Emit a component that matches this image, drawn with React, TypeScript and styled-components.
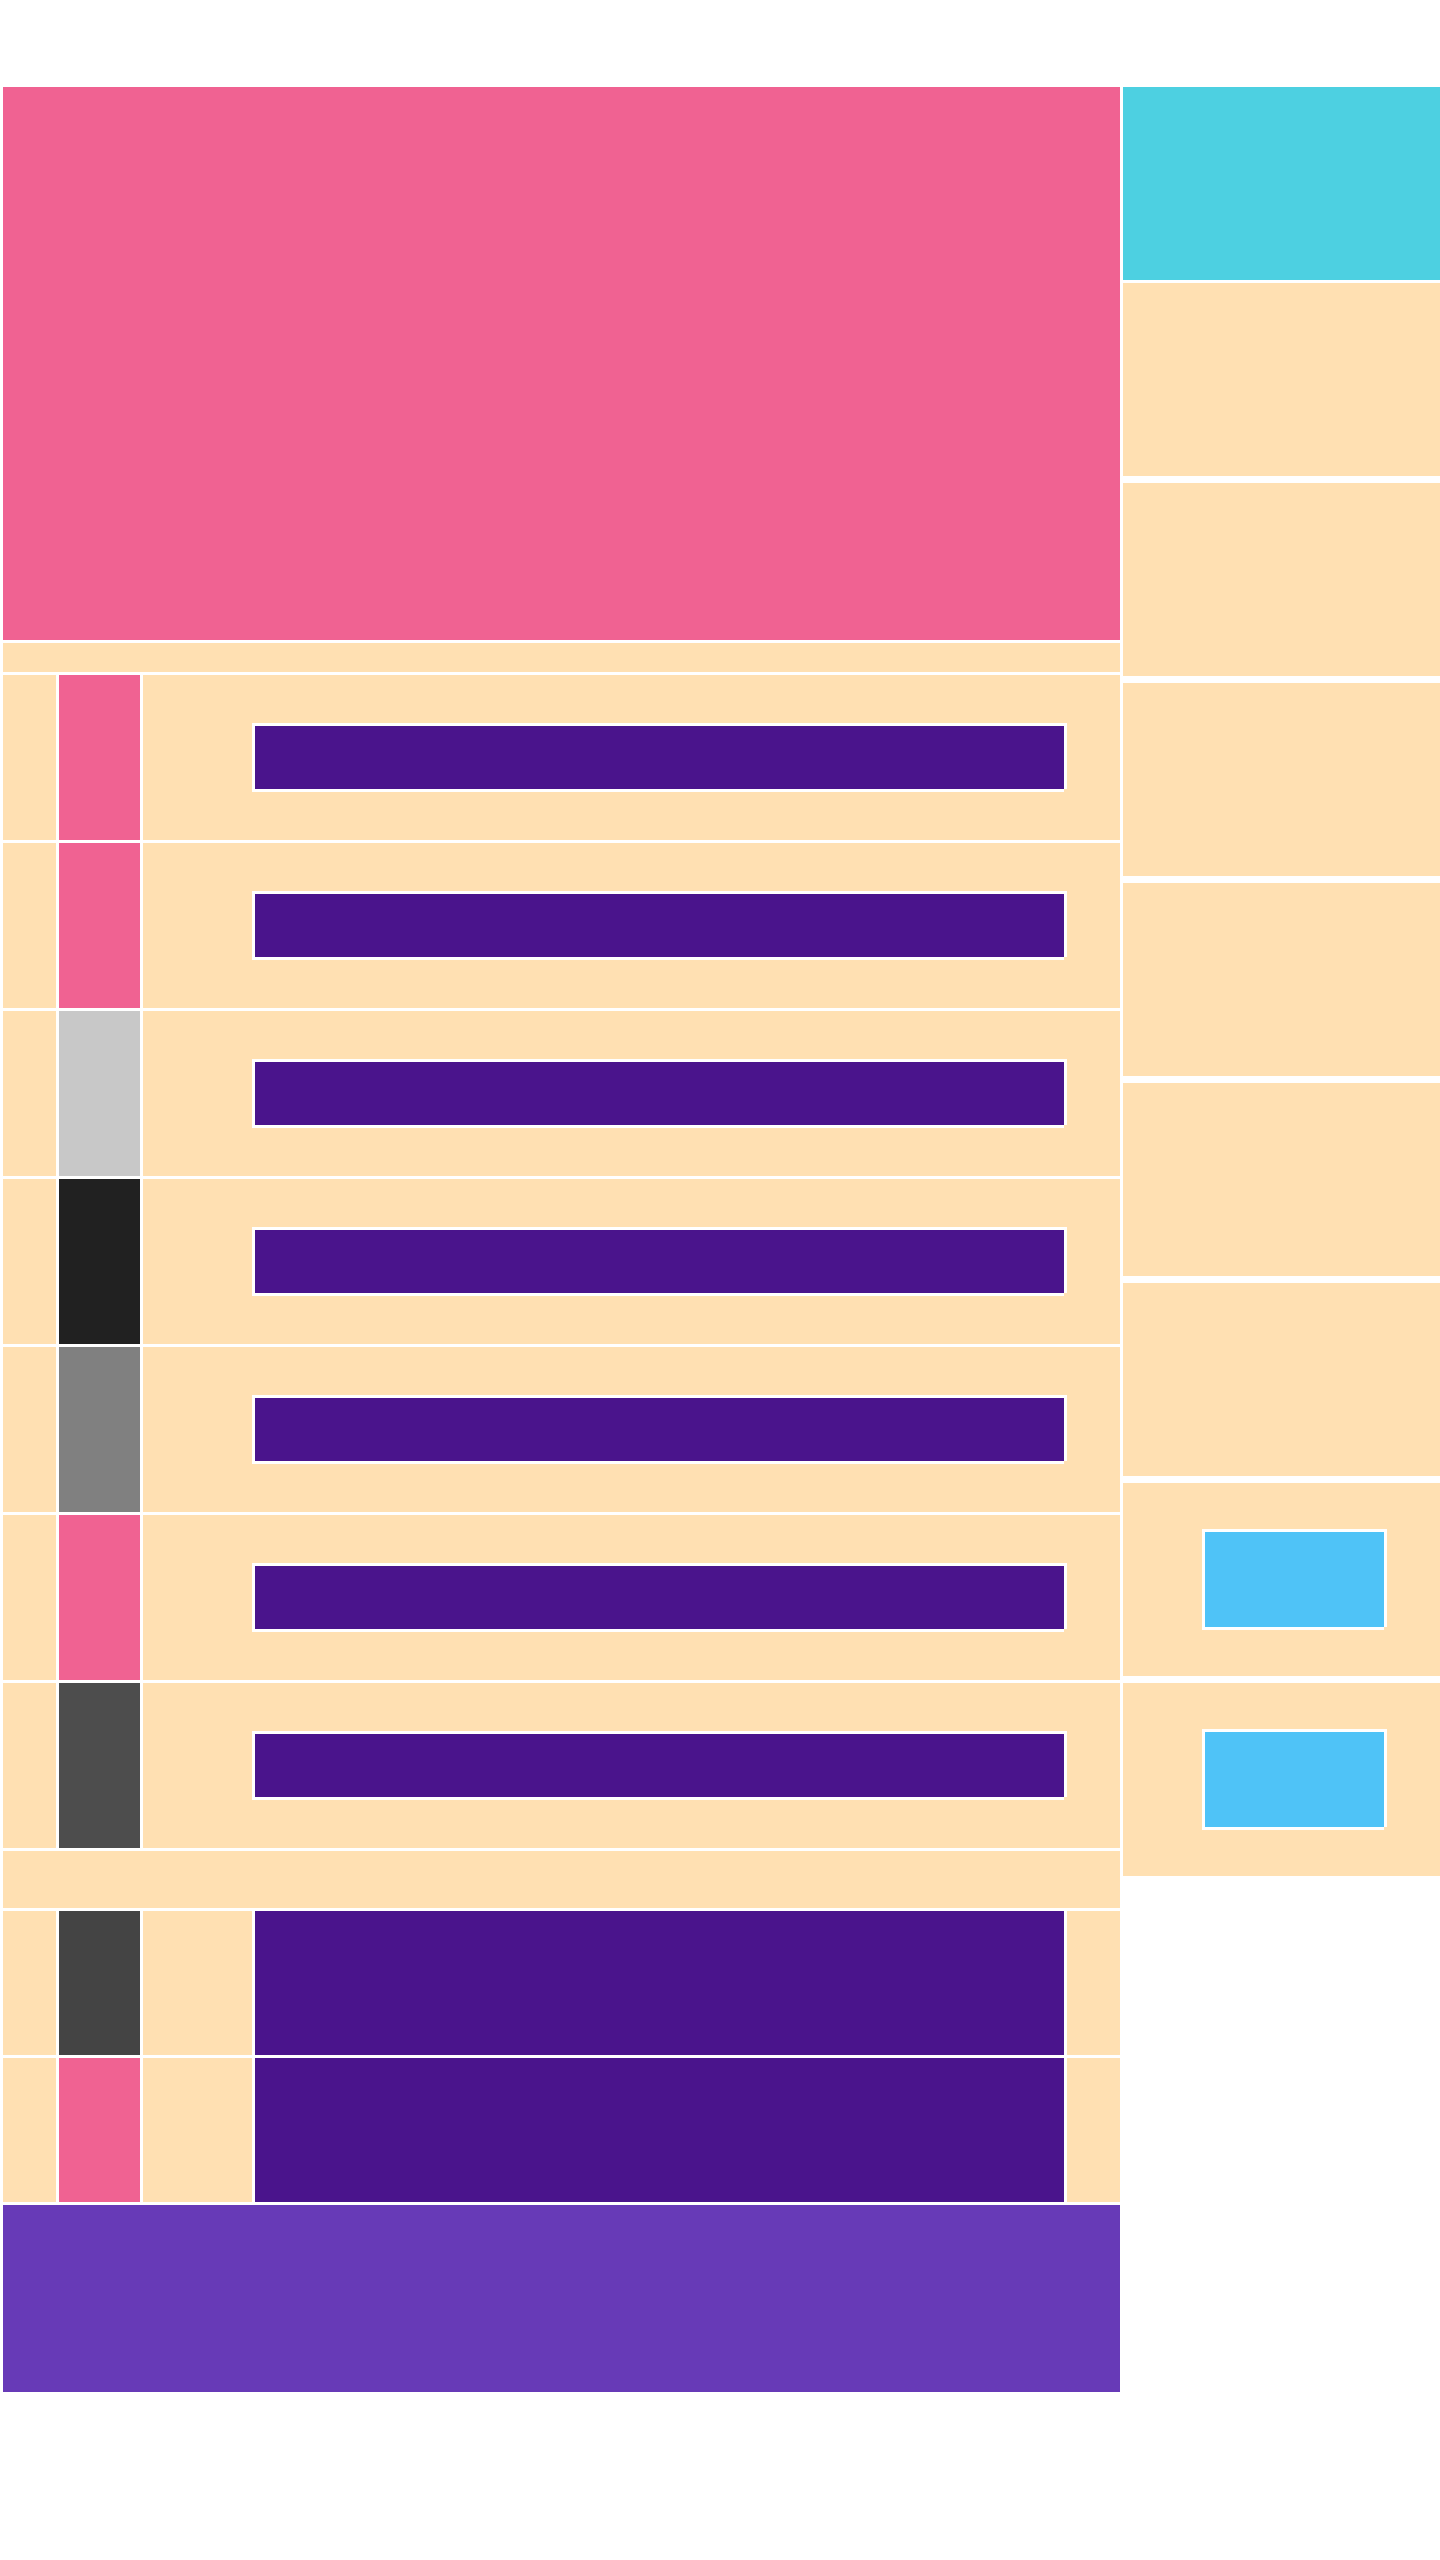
import React from 'react';
import styled, { createGlobalStyle } from 'styled-components';

const GlobalStyle = createGlobalStyle`
  html, body {
    margin: 0;
    padding: 0;
    background: #ffffff;
    font-family: 'Liberation Sans', Arial, sans-serif;
  }
`;

// white edge that leaves the bottom-right corner open
const notchedEdge = `
  box-shadow:
    -3px -3px 0 #ffffff,
    3px -3px 0 #ffffff,
    -3px 3px 0 #ffffff,
    3px 0 0 #ffffff,
    0 3px 0 #ffffff;
`;

const Page = styled.div`
  display: flex;
  gap: 3px;
  padding: 87px 0 0 3px;
  width: 1440px;
  box-sizing: border-box;
  overflow: hidden;
`;

const Main = styled.main`
  display: flex;
  flex-direction: column;
  gap: 3px;
  width: 1117px;
  flex-shrink: 0;
`;

const Hero = styled.section`
  height: 553px;
  background: #f06292;
`;

const Strip = styled.div<{ $h: number }>`
  height: ${(p) => p.$h}px;
  background: #ffe0b2;
`;

const Row = styled.div`
  display: grid;
  grid-template-columns: 53px 81px 1fr;
  gap: 3px;
  height: 165px;
`;

const Cell = styled.div`
  background: #ffe0b2;
`;

const Swatch = styled.div<{ $color: string }>`
  background: ${(p) => p.$color};
`;

const BarCell = styled.div`
  background: #ffe0b2;
  display: flex;
  align-items: center;
  padding-left: 112px;
`;

const Bar = styled.div`
  width: 809px;
  height: 63px;
  background: #4a148c;
  ${notchedEdge}
`;

const WideRow = styled.div`
  display: grid;
  grid-template-columns: 53px 81px 109px 809px 53px;
  gap: 3px;
  height: 144px;
`;

const Block = styled.div`
  background: #4a148c;
`;

const Footer = styled.footer`
  height: 187px;
  background: #673ab7;
`;

const Aside = styled.aside`
  display: flex;
  flex-direction: column;
  gap: 3px;
  width: 317px;
  flex-shrink: 0;
`;

const AsideHead = styled.div`
  height: 193px;
  background: #4dd0e1;
`;

const CardList = styled.div`
  display: flex;
  flex-direction: column;
  gap: 7px;
`;

const Card = styled.div`
  height: 193px;
  background: #ffe0b2;
  display: flex;
  align-items: center;
  padding-left: 82px;
`;

const CardButton = styled.button`
  width: 179px;
  height: 95px;
  border: none;
  padding: 0;
  background: #4fc3f7;
  ${notchedEdge}
`;

const rowColors = ['#f06292', '#f06292', '#c8c8c8', '#212121', '#808080', '#f06292', '#4d4d4d'];
const wideColors = ['#444444', '#f06292'];

const App: React.FC = () => (
  <>
    <GlobalStyle />
    <Page>
      <Main>
        <Hero />
        <Strip $h={29} />
        {rowColors.map((c, i) => (
          <Row key={i}>
            <Cell />
            <Swatch $color={c} />
            <BarCell>
              <Bar />
            </BarCell>
          </Row>
        ))}
        <Strip $h={57} />
        {wideColors.map((c, i) => (
          <WideRow key={i}>
            <Cell />
            <Swatch $color={c} />
            <Cell />
            <Block />
            <Cell />
          </WideRow>
        ))}
        <Footer />
      </Main>
      <Aside>
        <AsideHead />
        <CardList>
          {Array.from({ length: 8 }).map((_, i) => (
            <Card key={i}>{i >= 6 && <CardButton aria-label="action" />}</Card>
          ))}
        </CardList>
      </Aside>
    </Page>
  </>
);

export default App;
